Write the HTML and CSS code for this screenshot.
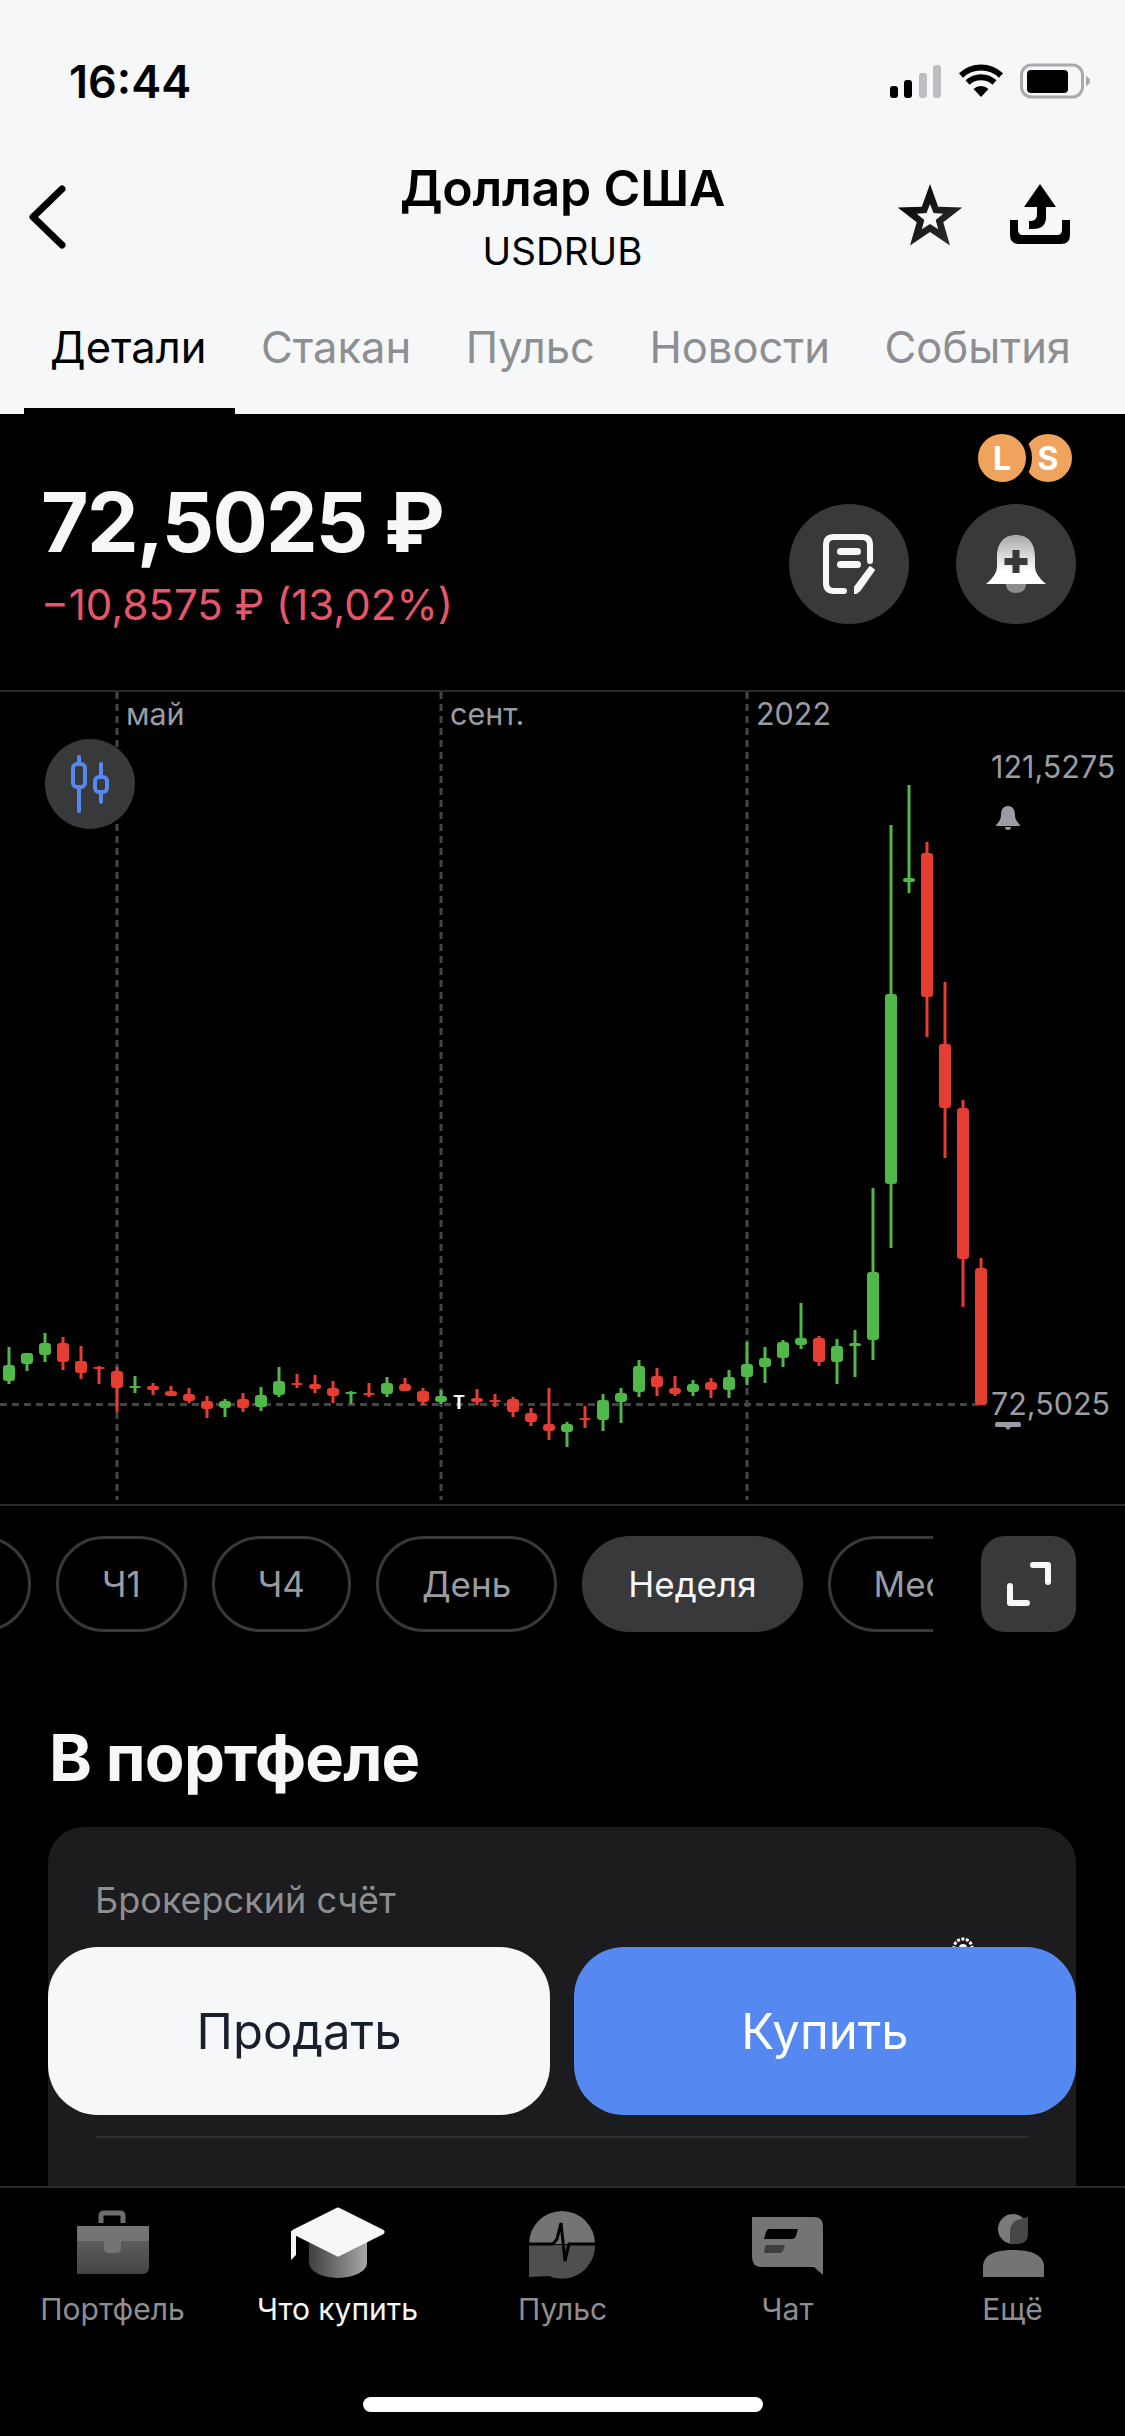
FILE: index.html
```html
<!DOCTYPE html>
<html lang="ru">
<head>
<meta charset="utf-8">
<title>Доллар США</title>
<link rel="stylesheet" href="styles.css">
</head>
<body>
<div class="screen">
  <section class="top">
    <div class="status">
      <span class="time">16:44</span>
      <div class="status-icons">
        <svg class="signal" width="52" height="34" viewBox="0 0 52 34"><rect x="0" y="22" width="8" height="12" rx="3" fill="#000"/><rect x="14" y="16" width="8" height="18" rx="3" fill="#000"/><rect x="29" y="9" width="8" height="25" rx="3" fill="#bdbec1"/><rect x="43" y="1" width="8" height="33" rx="3" fill="#bdbec1"/></svg>
        <svg class="wifi" width="46" height="34" viewBox="0 0 46 34"><path d="M23 33 15.500 25a11 11 0 0 1 15 0Z" fill="#000"/><path d="M9.500 18.500a20 20 0 0 1 27 0" fill="none" stroke="#000" stroke-width="6"/><path d="M3 11.500a29 29 0 0 1 40 0" fill="none" stroke="#000" stroke-width="6"/></svg>
        <svg class="battery" width="72" height="36" viewBox="0 0 72 36"><rect x="1.500" y="2" width="61" height="32" rx="10" fill="none" stroke="#a9aaad" stroke-width="3"/><rect x="7" y="7" width="41" height="23" rx="4" fill="#000"/><path d="M66 13q4 2 4 5t-4 5Z" fill="#a9aaad"/></svg>
      </div>
    </div>
    <header class="head">
      <div class="head-left">
        <svg width="38" height="64" viewBox="0 0 38 64"><path d="M34 4 5 32l29 28" fill="none" stroke="#000" stroke-width="7" stroke-linecap="round" stroke-linejoin="round"/></svg>
      </div>
      <div class="head-title">
        <h1>Доллар США</h1>
        <p>USDRUB</p>
      </div>
      <div class="head-right">
        <svg width="66" height="64" viewBox="0 0 66 64"><defs><linearGradient id="star" x1="0" y1="0" x2="1" y2="1"><stop offset="0" stop-color="#000"/><stop offset="1" stop-color="#333"/></linearGradient></defs><path d="M33 1 41.200 23.700 65.300 24.500 46.300 39.300 53 62.500 33 49 13 62.500 19.700 39.300.7 24.500 24.800 23.700Z" fill="url(#star)"/><path d="M33 21 36.500 30.100 46.300 30.700 38.700 36.900 41.200 46.300 33 41 24.800 46.300 27.300 36.900 19.700 30.700 29.500 30.100Z" fill="#f6f7f8"/></svg>
        <svg width="62" height="62" viewBox="0 0 62 62"><path d="M31 1 47 24H37V34Q37 46 24 46H20V38H22Q28 38 28 31V24H15Z" fill="#000"/><path d="M1 37H9V47Q9 52 14 52H48Q53 52 53 47V37H61V52Q61 61 52 61H10Q1 61 1 52Z" fill="#000"/></svg>
      </div>
    </header>
    <nav class="tabs">
      <a class="tab tab-active">Детали</a>
      <a class="tab">Стакан</a>
      <a class="tab">Пульс</a>
      <a class="tab">Новости</a>
      <a class="tab">События</a>
    </nav>
  </section>

  <section class="quote">
    <div class="quote-left">
      <div class="price">72,5025 ₽</div>
      <div class="change">−10,8575 ₽ (13,02%)</div>
    </div>
    <div class="quote-actions">
      <div class="round-btn">
        <svg width="52" height="60" viewBox="0 0 52 60"><path d="M21 57H11Q3 57 3 49V11Q3 3 11 3H39Q47 3 47 11V27" fill="none" stroke="#f6f7f8" stroke-width="6" stroke-linecap="round"/><rect x="14" y="14" width="24" height="7" rx="3.500" fill="#f6f7f8"/><rect x="14" y="27" width="24" height="7" rx="3.500" fill="#f6f7f8"/><path d="M47 33 51 36 37 56 32 60 32 53Z" fill="#f6f7f8" stroke="#f6f7f8" stroke-width="2" stroke-linejoin="round"/></svg>
      </div>
      <div class="round-btn">
        <svg width="62" height="58" viewBox="0 0 62 58"><defs><linearGradient id="bell" x1="0" y1="0" x2="0" y2="1"><stop offset="0" stop-color="#a8a8a8"/><stop offset=".75" stop-color="#fff"/></linearGradient></defs><path d="M21 48h20v2a10 8 0 0 1-20 0Z" fill="#8d8d8f"/><path d="M31 0C18 0 12 9 12 22V32Q12 40 1 49H61Q50 40 50 32V22C50 9 44 0 31 0Z" fill="url(#bell)"/><path d="M27.500 15h7v8h8v7h-8v8h-7v-8h-8v-7h8Z" fill="#38393b"/></svg>
      </div>
    </div>
    <div class="badges">
      <span class="badge badge-l">L</span>
      <span class="badge badge-s">S</span>
    </div>
  </section>

  <section class="chart">
    <svg class="chart-svg" width="1125" height="816" viewBox="0 690 1125 816">
      <g class="grid">
        <path d="M117 692V1500M441 692V1500M747 692V1500"/>
        <path d="M0 1404.500H985"/>
      </g>
      <text class="axis" x="126" y="725">май</text>
      <text class="axis" x="450" y="725">сент.</text>
      <text class="axis" x="756" y="725">2022</text>
      <text class="axis" x="991" y="778">121,5275</text>
      <text class="axis" x="991" y="1415">72,5025</text>
      <path d="M1008 806c-5 0-7 4-7 9 0 4-2 7-5 10v1h24v-1c-3-3-5-6-5-10 0-5-2-9-7-9Zm-3 21a3 3 0 0 0 6 0Z" fill="#9a9ca3"/>
      <path d="M996 1422h24q2 3 0 5h-24q-2-2 0-5Zm9 5h6l-3 3Z" fill="#9a9ca3"/>
      <g class="up">
        <path class="wick" d="M9 1347V1384M27 1353V1371M45 1333V1362M135 1376V1393M225 1399V1417M261 1387V1411M279 1367V1397M351 1391V1404M387 1377V1397M441 1390V1404M567 1422V1447M603 1394V1431M621 1388V1423M639 1360V1397M693 1380V1396M729 1370V1398M747 1342V1385M765 1347V1383M783 1340V1367M801 1303V1349M837 1339V1384M855 1330V1377M873 1188V1360M891 825V1248M909 785V893"/>
        <rect x="3" y="1365" height="16"/><rect x="21" y="1353" height="11"/><rect x="39" y="1343" height="12"/><rect x="129" y="1386" height="2"/><rect x="219" y="1401" height="7"/><rect x="255" y="1395" height="12"/><rect x="273" y="1381" height="14"/><rect x="345" y="1392" height="2"/><rect x="381" y="1383" height="11"/><rect x="435" y="1396" height="6"/><rect x="561" y="1424" height="8"/><rect x="597" y="1400" height="20"/><rect x="615" y="1393" height="9"/><rect x="633" y="1366" height="26"/><rect x="687" y="1384" height="8"/><rect x="723" y="1377" height="13"/><rect x="741" y="1364" height="13"/><rect x="759" y="1358" height="9"/><rect x="777" y="1342" height="16"/><rect x="795" y="1338" height="7"/><rect x="831" y="1346" height="16"/><rect x="849" y="1343" height="3"/><rect x="867" y="1272" height="68"/><rect x="885" y="994" height="190"/><rect x="903" y="878" height="4"/>
      </g>
      <g class="down">
        <path class="wick" d="M63 1337V1370M81 1346V1379M99 1366V1384M117 1367V1412M153 1383V1395M171 1386V1396M189 1388V1403M207 1396V1418M243 1393V1412M297 1374V1388M315 1375V1393M333 1381V1403M369 1383V1397M405 1378V1391M423 1388V1405M477 1389V1405M495 1394V1407M513 1397V1417M531 1408V1426M549 1388V1440M585 1406V1428M657 1368V1396M675 1376V1396M711 1378V1398M819 1336V1366M927 842V1037M945 982V1158M963 1100V1307M981 1258V1405"/>
        <rect x="57" y="1343" height="19"/><rect x="75" y="1361" height="12"/><rect x="93" y="1367" height="2"/><rect x="111" y="1371" height="17"/><rect x="147" y="1386" height="4"/><rect x="165" y="1391" height="5"/><rect x="183" y="1394" height="7"/><rect x="201" y="1401" height="8"/><rect x="237" y="1399" height="9"/><rect x="291" y="1383" height="2"/><rect x="309" y="1384" height="5"/><rect x="327" y="1388" height="8"/><rect x="363" y="1393" height="2"/><rect x="399" y="1384" height="7"/><rect x="417" y="1391" height="11"/><rect x="471" y="1398" height="4"/><rect x="489" y="1400" height="2"/><rect x="507" y="1399" height="13"/><rect x="525" y="1413" height="9"/><rect x="543" y="1424" height="7"/><rect x="579" y="1418" height="2"/><rect x="651" y="1376" height="11"/><rect x="669" y="1388" height="6"/><rect x="705" y="1382" height="8"/><rect x="813" y="1338" height="24"/><rect x="921" y="853" height="144"/><rect x="939" y="1044" height="64"/><rect x="957" y="1108" height="151"/><rect x="975" y="1268" height="137"/>
      </g>
      <g class="flat">
        <path class="wick" d="M459 1395V1409"/>
        <rect x="453" y="1395" height="2"/>
      </g>
    </svg>
    <div class="chart-toggle">
      <svg width="42" height="58" viewBox="0 0 42 58" fill="none" stroke="#5588f0" stroke-width="4" stroke-linecap="round"><path d="M10 2V9M10 32V56M32 9V22M32 37V47"/><rect x="4" y="9" width="12" height="23" rx="4"/><rect x="26" y="22" width="12" height="15" rx="4"/></svg>
    </div>
  </section>

  <section class="periods">
    <div class="period-list">
      <span class="pill pill-hidden"></span>
      <span class="pill">Ч1</span>
      <span class="pill">Ч4</span>
      <span class="pill">День</span>
      <span class="pill pill-active">Неделя</span>
      <span class="pill">Месяц</span>
    </div>
    <button class="expand">
      <svg width="44" height="44" viewBox="0 0 44 44" fill="none" stroke="#f6f7f8" stroke-width="6" stroke-linecap="round" stroke-linejoin="round"><path d="M26 3H41V20"/><path d="M3 24V41H20"/></svg>
    </button>
  </section>

  <section class="holdings">
    <h2>В портфеле</h2>
    <div class="card">
      <div class="card-label">Брокерский счёт</div>
      <svg class="gear" width="26" height="26" viewBox="0 0 26 26"><circle cx="13" cy="13" r="9" fill="none" stroke="#fff" stroke-width="3" stroke-dasharray="3 1.500"/><circle cx="13" cy="13" r="4" fill="#fff"/></svg>
      <div class="card-divider"></div>
    </div>
  </section>

  <div class="trade">
    <button class="trade-btn trade-sell">Продать</button>
    <button class="trade-btn trade-buy">Купить</button>
  </div>

  <nav class="bottom">
    <div class="bottom-items">
      <a class="bottom-item">
        <svg width="100" height="80" viewBox="0 0 100 80"><defs><linearGradient id="bag" x1="0" y1="0" x2="0" y2="1"><stop offset="0" stop-color="#5c5c5c"/><stop offset="1" stop-color="#444"/></linearGradient></defs><path d="M38 18V11Q38 8 41 8H57Q60 8 60 11V18" fill="none" stroke="#6e6e6e" stroke-width="5"/><path d="M14 21H86V36H14Z" fill="#747474"/><path d="M14 36H86V62Q86 69 79 69H14Z" fill="url(#bag)"/><path d="M41 36H58V43Q58 48 53 48H46Q41 48 41 43Z" fill="#747474"/></svg>
        <span>Портфель</span>
      </a>
      <a class="bottom-item bottom-item-active">
        <svg width="100" height="80" viewBox="0 0 100 80"><defs><linearGradient id="cap" x1="0" y1="0" x2="1" y2="0"><stop offset="0" stop-color="#3f3f3f"/><stop offset="1" stop-color="#a8a8a8"/></linearGradient></defs><path d="M21 30H79V58A29 15 0 0 1 21 58Z" fill="url(#cap)"/><path d="M50 5 94 27 50 49 6 27Z" fill="#f6f7f8" stroke="#f6f7f8" stroke-width="5" stroke-linejoin="round"/><path d="M3 26H8V50L3 55Z" fill="#f6f7f8"/></svg>
        <span>Что купить</span>
      </a>
      <a class="bottom-item">
        <svg width="100" height="80" viewBox="0 0 100 80"><path d="M16 39A33 33 0 0 1 82 39Z" fill="#747474"/><path d="M16 40H82A33 33 0 0 1 36 71L16 72Z" fill="#4f4f4f"/><path d="M16 39H40L44 34 48 18 52 56 56 39H83" fill="none" stroke="#000" stroke-width="3"/></svg>
        <span>Пульс</span>
      </a>
      <a class="bottom-item">
        <svg width="100" height="80" viewBox="0 0 100 80"><path d="M14 12H76Q85 12 85 21V70L76 62H24Q14 62 14 52Z" fill="#747474"/><path d="M31 24H60L58 31Q57 34 54 34H26L28 27Q29 24 31 24Z" fill="#000"/><path d="M29 40H47L45 46Q44 48 42 48H26L27 42Q27 40 29 40Z" fill="#3e3e3e"/></svg>
        <span>Чат</span>
      </a>
      <a class="bottom-item">
        <svg width="100" height="80" viewBox="0 0 100 80"><circle cx="50" cy="24" r="15" fill="#7a7a7a"/><path d="M65 12V28Q65 39 54 39H47V27Q47 16 58 14Z" fill="#474747"/><path d="M20 72V62C20 50 32 45 50 45S81 50 81 62V72Z" fill="#747474"/></svg>
        <span>Ещё</span>
      </a>
    </div>
    <div class="home-indicator"></div>
  </nav>
</div>
</body>
</html>
```

FILE: styles.css
```css
* { box-sizing: border-box; }
html, body { margin: 0; padding: 0; background: #000; }
body { font-family: Inter, "Noto Sans", "Liberation Sans", sans-serif; }
h1, h2, p { margin: 0; }
svg { display: block; }

.screen {
  position: relative;
  width: 1125px;
  height: 2436px;
  overflow: hidden;
  background: #000;
  color: #f6f7f8;
}

/* light top */
.top { height: 414px; background: #f6f7f8; color: #000; }
.status {
  height: 162px;
  display: flex;
  align-items: center;
  justify-content: space-between;
  padding: 0 33px 0 69px;
}
.time { font-size: 45px; font-weight: 600; }
.status-icons { display: flex; align-items: center; gap: 16px; }
.head {
  height: 118px;
  display: grid;
  grid-template-columns: 1fr auto 1fr;
  align-items: start;
}
.head-left { padding: 23px 0 0 28px; }
.head-title { text-align: center; }
.head-title h1 { font-size: 50px; line-height: 52px; font-weight: 600; letter-spacing: -0.2px; }
.head-title p { font-size: 38.5px; line-height: 48px; margin-top: 13px; font-weight: 400; }
.head-right {
  display: flex;
  justify-content: flex-end;
  gap: 46px;
  padding: 21px 54px 0 0;
}
.tabs {
  height: 134px;
  display: flex;
  align-items: center;
  justify-content: space-between;
  padding: 0 54px 0 50px;
}
.tab {
  position: relative;
  font-size: 43.5px;
  line-height: 56px;
  color: #8d8e92;
}
.tab-active { color: #000; }
.tab-active::after {
  content: "";
  position: absolute;
  left: -26px;
  right: -29px;
  top: 89px;
  height: 6px;
  background: #000;
}

/* quote */
.quote {
  position: relative;
  height: 276px;
  display: flex;
  justify-content: space-between;
  padding: 0 49px 0 41px;
}
.quote-left { padding-top: 59px; }
.price { font-size: 82px; line-height: 100px; font-weight: 700; letter-spacing: -1.8px; }
.change { font-size: 42px; line-height: 56px; margin-top: 4px; color: #e4566a; }
.quote-actions { display: flex; gap: 47px; padding-top: 90px; }
.round-btn {
  width: 120px;
  height: 120px;
  border-radius: 50%;
  background: #38393b;
  display: flex;
  align-items: center;
  justify-content: center;
}
.badges { position: absolute; right: 47px; top: 14px; display: flex; }
.badge {
  width: 60px;
  height: 60px;
  border-radius: 50%;
  border: 6px solid #000;
  background: #efa35c;
  color: #fff;
  font-size: 32px;
  font-weight: 700;
  display: flex;
  align-items: center;
  justify-content: center;
}
.badge-l { position: relative; z-index: 1; }
.badge-s { margin-left: -14px; }

/* chart */
.chart {
  position: relative;
  height: 816px;
  border-top: 2px solid #2b2b2d;
  border-bottom: 2px solid #2b2b2d;
}
.chart-svg { margin-top: -2px; }
.grid path { fill: none; stroke: #444547; stroke-width: 3; stroke-dasharray: 7 5; }
.axis { font-size: 30.5px; fill: #9a9ca3; font-family: Inter, "Noto Sans", sans-serif; }
.wick { fill: none; stroke-width: 3; }
.up rect, .down rect, .flat rect { width: 12px; rx: 3px; ry: 3px; }
.up rect { fill: #4fb848; }
.down rect { fill: #e53d31; }
.flat rect { fill: #fff; }
.up .wick { stroke: #4fb848; }
.down .wick { stroke: #e53d31; }
.flat .wick { stroke: #fff; }
.chart-toggle {
  position: absolute;
  left: 45px;
  top: 47px;
  width: 90px;
  height: 90px;
  border-radius: 50%;
  background: #38393b;
  display: flex;
  align-items: center;
  justify-content: center;
}

/* periods */
.periods { display: flex; padding-top: 30px; }
.period-list {
  width: 933px;
  height: 96px;
  overflow: hidden;
  display: flex;
  gap: 25px;
}
.pill {
  flex: none;
  height: 96px;
  padding: 0 43px;
  border-radius: 48px;
  border: 3px solid #38393b;
  color: #9a9ca3;
  font-size: 35px;
  line-height: 90px;
}
.pill-hidden { width: 131px; margin-left: -100px; }
.pill-active { background: #38393b; color: #f6f7f8; }
.expand {
  width: 95px;
  height: 96px;
  margin-left: 48px;
  padding: 0;
  border: 0;
  border-radius: 24px;
  background: #38393b;
  display: flex;
  align-items: center;
  justify-content: center;
}

/* holdings */
.holdings { padding: 86px 49px 0 48px; }
.holdings h2 { font-size: 65px; line-height: 80px; font-weight: 700; padding-left: 1px; letter-spacing: -0.8px; }
.card {
  position: relative;
  margin-top: 29px;
  height: 420px;
  padding: 50px 47px 0 47px;
  border-radius: 36px;
  background: #1c1c1e;
}
.card-label { font-size: 36px; line-height: 46px; color: #8e8e93; }
.gear { position: absolute; right: 100px; top: 108px; }
.card-divider { height: 2px; margin-top: 213px; background: #2e2e30; }

/* overlays */
.trade {
  position: absolute;
  left: 48px;
  right: 49px;
  top: 1947px;
  display: flex;
  gap: 24px;
}
.trade-btn {
  flex: 1;
  height: 168px;
  border: 0;
  border-radius: 50px;
  font-family: inherit;
  font-size: 49px;
}
.trade-sell { background: #f6f7f8; color: #1a1f2e; }
.trade-buy { background: #5588f0; color: #fff; }

.bottom {
  position: absolute;
  left: 0;
  right: 0;
  bottom: 0;
  height: 250px;
  background: #000;
  border-top: 2px solid #2b2b2d;
  padding-top: 17px;
}
.bottom-items { display: grid; grid-template-columns: repeat(5, 225px); }
.bottom-item {
  display: flex;
  flex-direction: column;
  align-items: center;
  font-size: 30px;
  line-height: 48px;
  color: #8e8e93;
}
.bottom-item-active { color: #f6f7f8; }
.home-indicator {
  width: 400px;
  height: 15px;
  margin: 64px auto 0;
  border-radius: 8px;
  background: #fff;
}
```
